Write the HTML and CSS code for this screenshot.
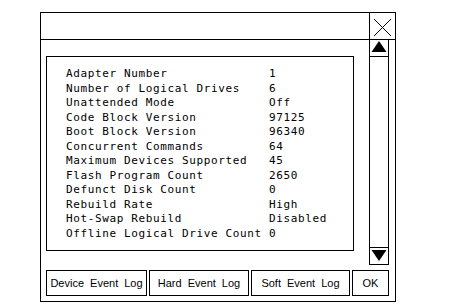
FILE: index.html
```html
<!DOCTYPE html>
<html>
<head>
<meta charset="utf-8">
<link rel="stylesheet" href="styles.css">
</head>
<body>
<div class="window">
  <div class="titlebar">
    <div class="title"></div>
    <div class="close">
      <svg width="25" height="26" viewBox="0 0 25 26"><path d="M4 6 L21 23 M21 6 L4 23" stroke="#000" stroke-width="1" fill="none"/></svg>
    </div>
  </div>
  <div class="main">
    <div class="pane">
      <div class="info">
        <div class="row"><span class="label">Adapter Number</span><span class="value">1</span></div>
        <div class="row"><span class="label">Number of Logical Drives</span><span class="value">6</span></div>
        <div class="row"><span class="label">Unattended Mode</span><span class="value">Off</span></div>
        <div class="row"><span class="label">Code Block Version</span><span class="value">97125</span></div>
        <div class="row"><span class="label">Boot Block Version</span><span class="value">96340</span></div>
        <div class="row"><span class="label">Concurrent Commands</span><span class="value">64</span></div>
        <div class="row"><span class="label">Maximum Devices Supported</span><span class="value">45</span></div>
        <div class="row"><span class="label">Flash Program Count</span><span class="value">2650</span></div>
        <div class="row"><span class="label">Defunct Disk Count</span><span class="value">0</span></div>
        <div class="row"><span class="label">Rebuild Rate</span><span class="value">High</span></div>
        <div class="row"><span class="label">Hot-Swap Rebuild</span><span class="value">Disabled</span></div>
        <div class="row"><span class="label">Offline Logical Drive Count</span><span class="value">0</span></div>
      </div>
    </div>
    <div class="scrollbar">
      <div class="sbtn up"><svg width="18" height="16" viewBox="0 0 18 16"><polygon points="1.5,12 9,1 16.5,12" fill="#000"/></svg></div>
      <div class="track"></div>
      <div class="sbtn down"><svg width="18" height="16" viewBox="0 0 18 16"><polygon points="1.5,2 16.5,2 9,13" fill="#000"/></svg></div>
    </div>
  </div>
  <div class="footer">
    <div class="btn w-device">Device Event Log</div>
    <div class="btn w-hard">Hard Event Log</div>
    <div class="btn w-soft">Soft Event Log</div>
    <div class="btn w-ok">OK</div>
  </div>
</div>
</body>
</html>
```

FILE: styles.css
```css
html, body {
  margin: 0;
  padding: 0;
  background: #fff;
}
body {
  padding: 12px 0 0 40px;
}
.window {
  box-sizing: border-box;
  width: 356px;
  height: 290px;
  border: 1px solid #000;
  display: flex;
  flex-direction: column;
  background: #fff;
}
.titlebar {
  height: 26px;
  border-bottom: 1px solid #000;
  display: flex;
  flex: none;
}
.title {
  flex: 1;
}
.close {
  width: 25px;
  border-left: 1px solid #000;
  display: flex;
}
.close svg {
  display: block;
}
.main {
  display: flex;
  flex: none;
  height: 225px;
}
.pane {
  width: 328px;
  padding: 16px 0 0 5px;
  box-sizing: border-box;
}
.info {
  box-sizing: border-box;
  width: 308px;
  height: 195px;
  border: 1px solid #000;
  padding: 10px 0 0 19px;
  font-family: "DejaVu Sans Mono", monospace;
  font-size: 11px;
  letter-spacing: 0.63px;
  line-height: 14.55px;
  color: #000;
}
.row {
  display: flex;
  white-space: nowrap;
}
.label {
  width: 203px;
  flex: none;
}
.scrollbar {
  box-sizing: border-box;
  width: 20px;
  height: 225px;
  border-left: 1px solid #000;
  border-right: 1px solid #000;
  border-bottom: 1px solid #000;
  display: flex;
  flex-direction: column;
}
.sbtn {
  height: 16px;
  flex: none;
}
.sbtn svg {
  display: block;
}
.up {
  border-bottom: 1px solid #000;
}
.down {
  border-top: 1px solid #000;
}
.track {
  flex: 1;
}
.footer {
  display: flex;
  gap: 2px;
  padding: 5px 0 0 5px;
}
.btn {
  box-sizing: border-box;
  height: 26px;
  border: 1px solid #000;
  display: flex;
  align-items: center;
  justify-content: center;
  font-family: "Liberation Sans", Arial, sans-serif;
  font-size: 11px;
  word-spacing: 3px;
  color: #000;
  white-space: nowrap;
}
.w-device { width: 101px; }
.w-hard { width: 100px; }
.w-soft { width: 99px; }
.w-ok { width: 37px; }
```
